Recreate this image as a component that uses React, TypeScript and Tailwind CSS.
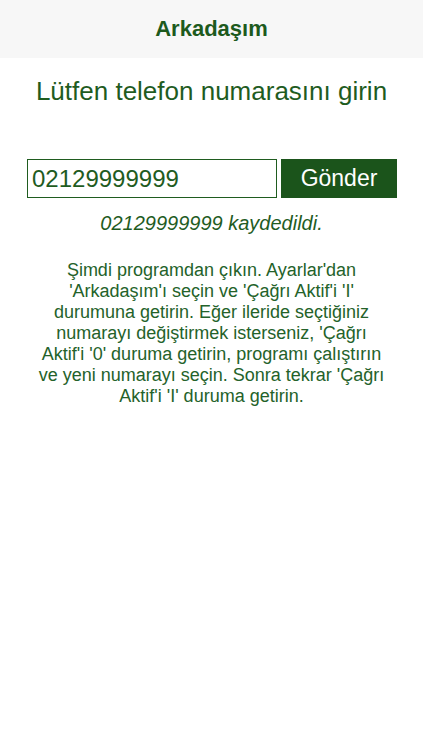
import React, { useState } from 'react';

const lines = [
    "Şimdi programdan çıkın. Ayarlar'dan",
    "'Arkadaşım'ı seçin ve 'Çağrı Aktif'i 'I'",
    "durumuna getirin. Eğer ileride seçtiğiniz",
    "numarayı değiştirmek isterseniz, 'Çağrı",
    "Aktif'i '0' duruma getirin, programı çalıştırın",
    "ve yeni numarayı seçin. Sonra tekrar 'Çağrı",
    "Aktif'i 'I' duruma getirin.",
];

export default function App() {
    const [phone, setPhone] = useState('02129999999');
    const [saved, setSaved] = useState('02129999999');

    return (
        <div className="min-h-[750px] w-full bg-white text-[#1f5c1f]" style={{ fontFamily: '"Liberation Sans", Arial, sans-serif' }}>
            <header className="h-[58px] bg-[#f7f7f7] flex items-center justify-center">
                <h1 className="text-[22px] font-bold leading-none text-[#1d5a1d]">Arkadaşım</h1>
            </header>

            <h2 className="mt-[18px] text-center text-[26px] leading-[30px]">Lütfen telefon numarasını girin</h2>

            <div className="mt-[53px] flex pl-[27px] gap-[4px]">
                <input
                    value={phone}
                    onChange={e => setPhone(e.target.value)}
                    className="w-[250px] h-[39px] border border-[#1f5c1f] px-[4px] text-[24px] text-[#1f5c1f] outline-none"
                />
                <button
                    onClick={() => setSaved(phone)}
                    className="w-[116px] h-[39px] bg-[#1b541b] text-white text-[23px]"
                >
                    Gönder
                </button>
            </div>

            <p className="mt-[14px] text-center italic text-[20px] leading-[23px]">{saved} kaydedildi.</p>

            <p className="mt-[25px] text-center text-[18px] leading-[21px] text-[#24622a]">
                {lines.map((l, i) => (
                    <React.Fragment key={i}>
                        {l}
                        {i < lines.length - 1 && <br />}
                    </React.Fragment>
                ))}
            </p>
        </div>
    );
}
